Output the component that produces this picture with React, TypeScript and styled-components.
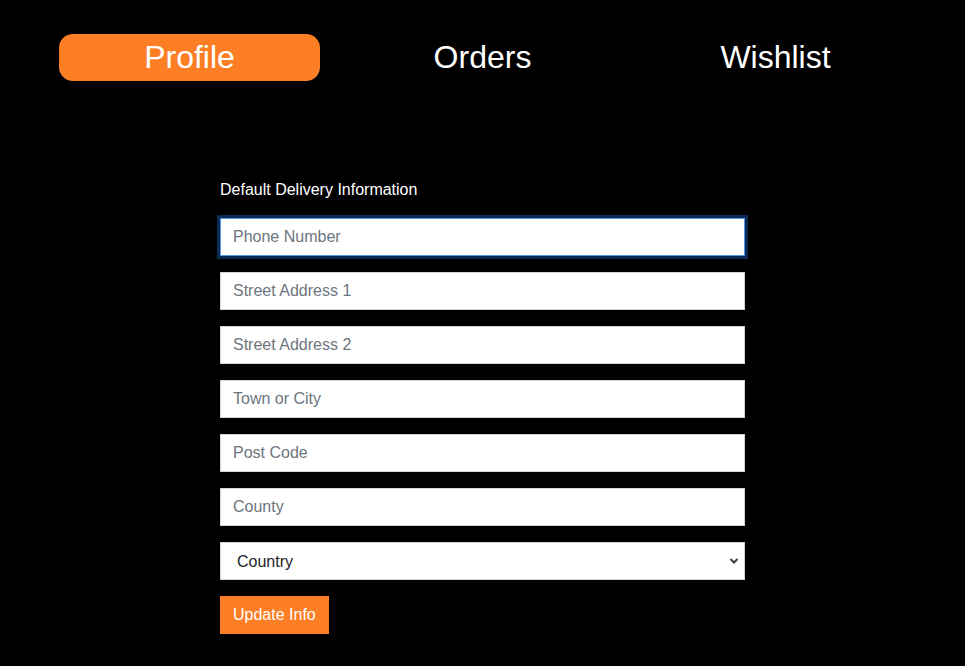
import styled, { createGlobalStyle } from 'styled-components';

const GlobalStyle = createGlobalStyle`
  html, body {
    margin: 0;
    padding: 0;
    background: #000;
  }
  body {
    font-family: 'Liberation Sans', Arial, Helvetica, sans-serif;
    color: #fff;
  }
`;

const Page = styled.div`
  min-height: 666px;
  padding: 34px 59px 0;
  box-sizing: border-box;
  background: #000;
`;

const Tabs = styled.nav`
  display: grid;
  grid-template-columns: repeat(3, 1fr);
  gap: 32px;
`;

const Tab = styled.button<{ active?: boolean }>`
  height: 47px;
  border: none;
  border-radius: 14px;
  background: ${(props) => (props.active ? '#fd7e24' : 'transparent')};
  color: #fff;
  font-family: inherit;
  font-size: 32px;
  line-height: 47px;
  padding: 0;
  cursor: pointer;
`;

const Form = styled.form`
  width: 525px;
  margin: 97px auto 0;
  display: flex;
  flex-direction: column;
  gap: 16px;
`;

const Title = styled.label`
  font-size: 16px;
  line-height: 24px;
  color: #fff;
`;

const Input = styled.input<{ focused?: boolean }>`
  height: 38px;
  box-sizing: border-box;
  padding: 6px 12px;
  font-family: inherit;
  font-size: 16px;
  color: #212529;
  background: #fff;
  border: 1px solid ${(props) => (props.focused ? '#5b93e6' : '#ced4da')};
  border-radius: 0;
  outline: none;
  box-shadow: ${(props) => (props.focused ? '0 0 0 3px #0b2b57' : 'none')};

  &::placeholder {
    color: #6c757d;
  }
`;

const SelectWrap = styled.div`
  position: relative;
`;

const Select = styled.select`
  width: 100%;
  height: 38px;
  box-sizing: border-box;
  padding: 6px 12px 6px 16px;
  font-family: inherit;
  font-size: 16px;
  color: #212529;
  background: #fff;
  border: 1px solid #ced4da;
  border-radius: 0;
  appearance: none;
  outline: none;
`;

const Chevron = styled.svg`
  position: absolute;
  right: 6px;
  top: 15px;
  width: 10px;
  height: 8px;
  pointer-events: none;
`;

const Button = styled.button`
  align-self: flex-start;
  height: 38px;
  padding: 0 13px;
  border: none;
  border-radius: 0;
  background: #fd7e24;
  color: #fff;
  font-family: inherit;
  font-size: 16px;
  cursor: pointer;
`;

const fields = [
  'Phone Number',
  'Street Address 1',
  'Street Address 2',
  'Town or City',
  'Post Code',
  'County',
];

const App = () => {
  return (
    <>
      <GlobalStyle />
      <Page>
        <Tabs>
          <Tab active>Profile</Tab>
          <Tab>Orders</Tab>
          <Tab>Wishlist</Tab>
        </Tabs>
        <Form onSubmit={(e) => e.preventDefault()}>
          <Title>Default Delivery Information</Title>
          {fields.map((f, i) => (
            <Input key={f} placeholder={f} focused={i === 0} />
          ))}
          <SelectWrap>
            <Select defaultValue="">
              <option value="">Country</option>
            </Select>
            <Chevron viewBox="0 0 10 8">
              <path d="M1.5 2 L5 5.5 L8.5 2" fill="none" stroke="#3a3d42" strokeWidth="2" />
            </Chevron>
          </SelectWrap>
          <Button type="submit">Update Info</Button>
        </Form>
      </Page>
    </>
  );
};

export default App;
